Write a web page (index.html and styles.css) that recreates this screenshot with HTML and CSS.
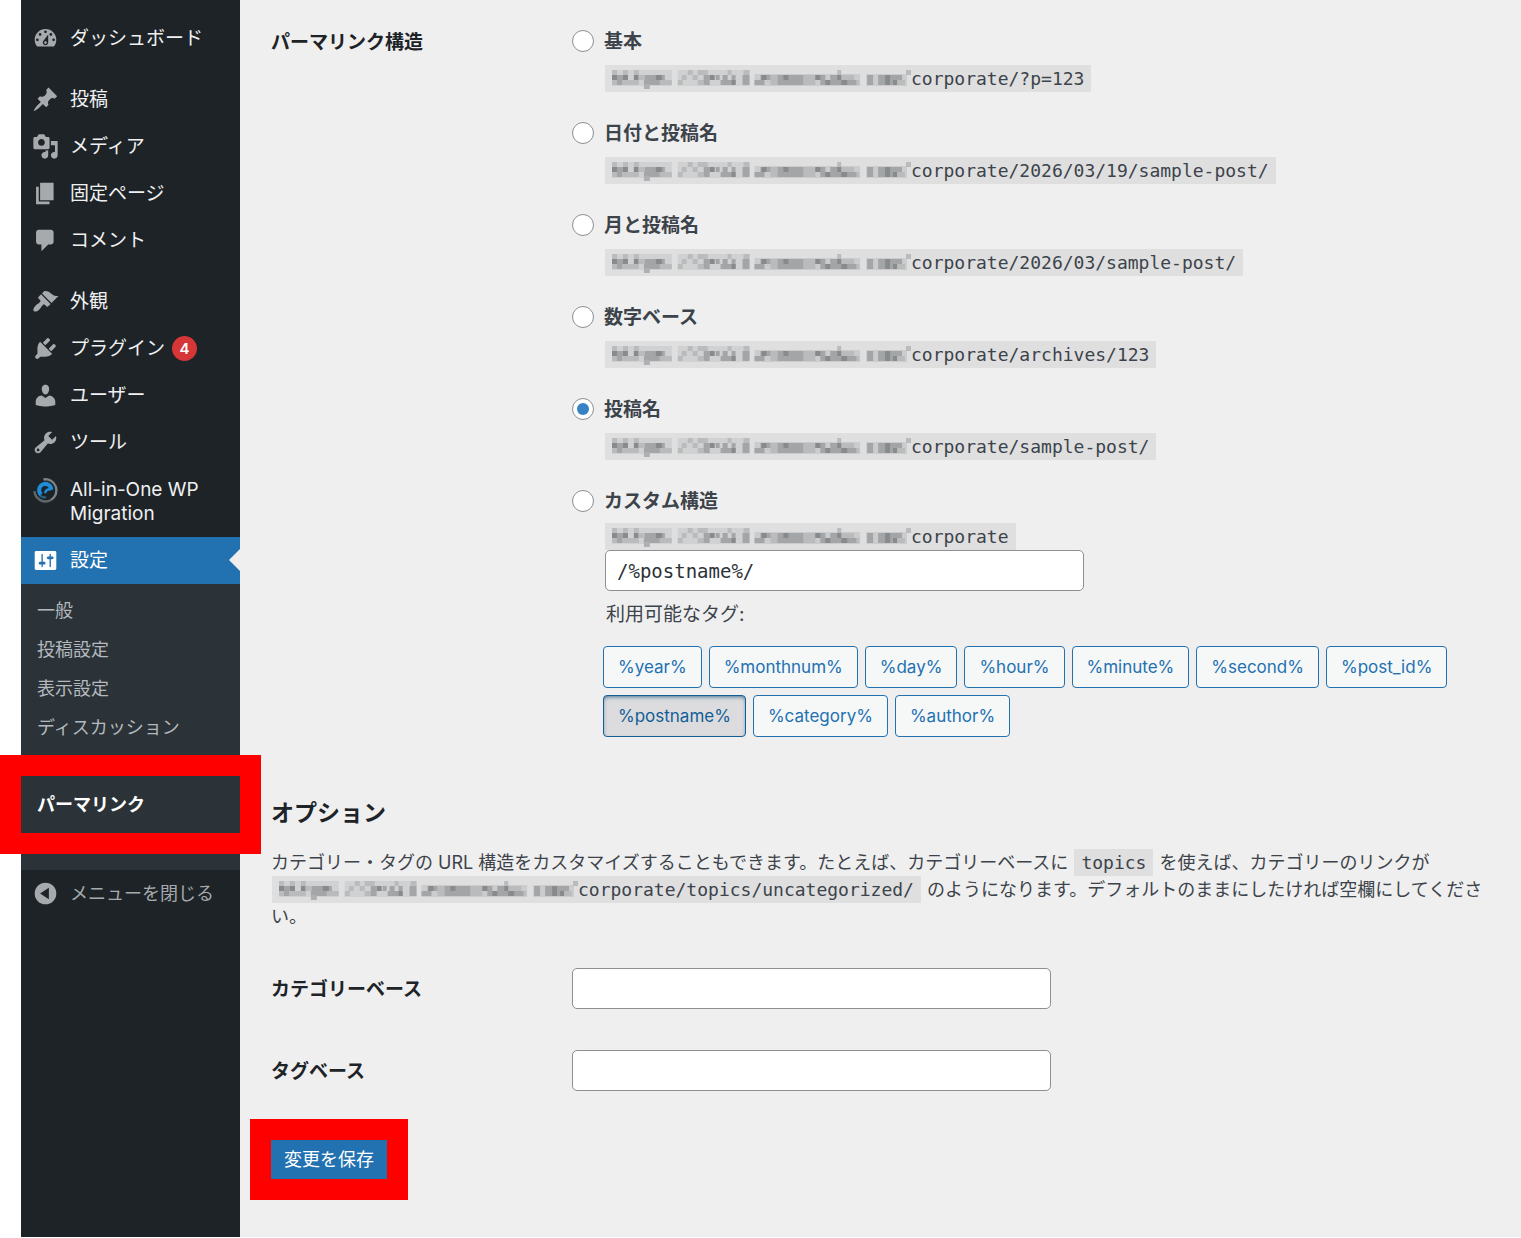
FILE: index.html
```html
<!DOCTYPE html>
<html lang="ja">
<head>
  <meta charset="UTF-8" />
  <meta name="viewport" content="width=device-width, initial-scale=1.0" />
  <link rel="stylesheet" href="styles.css">
  <title>パーマリンク設定</title>
</head>
<body>
<!-- Shared shapes -->
<svg class="defs" width="0" height="0" aria-hidden="true">
  <symbol id="masked-host" viewBox="0 0 300 20">
    <path fill="none" stroke="#d0d1d2" stroke-width="16" d="M0 9h60M66 9h72"/>
    <path fill="none" stroke="#cbcccd" stroke-width="12" d="M143 11h106M255 11h41"/>
    <g fill="none" stroke-width="5">
      <path stroke="#b9bbbc" d="M0 3.500h5M11 3.500h5M22 3.500h5M76 3.500h5M86 3.500h10M116 3.500h4M132 3.500h6M226 3.500h4M295 3.500h5M27 8.500h6M70 8.500h5M81 8.500h5M159 8.500h7M192 8.500h12M229 8.500h14M0 13.500h27M48 13.500h12M66 13.500h5M86 13.500h6M159 13.500h7M192 13.500h12M242 13.500h6M286 13.500h8"/>
      <path stroke="#a3a5a7" d="M5 8.500h6M22 8.500h5M33 8.500h20M92 8.500h6M104 8.500h4M111 8.500h5M120 8.500h4M131 8.500h7M149 8.500h10M166 8.500h26M204 8.500h10M219 8.500h10M256 8.500h6M267 8.500h24M5 13.500h5M32 13.500h16M92 13.500h6M109 13.500h15M131 13.500h7M143 13.500h10M166 13.500h26M209 13.500h36M256 13.500h6M267 13.500h19"/>
      <path stroke="#888b8e" d="M0 8.500h5M11 8.500h5M22 8.500h4M44 8.500h6M98 8.500h5M150 8.500h5M172 8.500h5M204 8.500h5M226 8.500h4M274 8.500h5M120 13.500h4M214 13.500h5M230 13.500h6M274 13.500h5M282 13.500h4"/>
      <path stroke="#aeb0b3" d="M32 17.500h6"/>
    </g>
  </symbol>
</svg>

<div class="page">
  <nav class="sidebar">
    <ul class="menu">
      <li><a class="menu-item" href="#"><svg class="icon" viewBox="0 0 20 20"><path fill-rule="evenodd" d="M3.760 16h12.480c1.100-1.370 1.760-3.110 1.760-5 0-4.420-3.580-8-8-8s-8 3.580-8 8c0 1.890.66 3.630 1.760 5zM10 4c.55 0 1 .45 1 1s-.45 1-1 1-1-.45-1-1 .45-1 1-1zM6 6c.55 0 1 .45 1 1s-.45 1-1 1-1-.45-1-1 .45-1 1-1zm8 0c.55 0 1 .45 1 1s-.45 1-1 1-1-.45-1-1 .45-1 1-1zm-5.370 5.550L12 7v6c0 1.100-.9 2-2 2s-2-.9-2-2c0-.57.24-1.080.63-1.450zM4 10c.55 0 1 .45 1 1s-.45 1-1 1-1-.45-1-1 .45-1 1-1zm12 0c.55 0 1 .45 1 1s-.45 1-1 1-1-.45-1-1 .45-1 1-1zm-5 3c0-.55-.45-1-1-1s-1 .45-1 1 .45 1 1 1 1-.45 1-1z"/></svg><span>ダッシュボード</span></a></li>
      <li class="separator"></li>
      <li><a class="menu-item" href="#"><svg class="icon" viewBox="0 0 20 20"><path d="M10.440 3.020l1.820-1.820 6.360 6.350-1.830 1.820c-1.050-.68-2.480-.57-3.410.36l-.75.75c-.92.93-1.040 2.350-.35 3.410l-1.830 1.820-2.410-2.410-2.800 2.790c-.42.42-3.380 2.710-3.800 2.290s1.860-3.390 2.280-3.810l2.790-2.790L4.100 9.360l1.830-1.820c1.050.69 2.480.57 3.400-.36l.75-.75c.93-.92 1.050-2.350.36-3.410z"/></svg><span>投稿</span></a></li>
      <li><a class="menu-item" href="#"><svg class="icon" viewBox="0 0 20 20"><path fill-rule="evenodd" d="M13 11V4c0-.55-.45-1-1-1h-1.670L9 1H5L3.670 3H2c-.55 0-1 .45-1 1v7c0 .55.45 1 1 1h10c.55 0 1-.45 1-1zM7 4.500c1.380 0 2.500 1.120 2.500 2.500S8.380 9.500 7 9.500 4.500 8.380 4.500 7 5.620 4.500 7 4.500zM14 6h5v10.500c0 1.380-1.120 2.500-2.500 2.500S14 17.880 14 16.500s1.120-2.500 2.500-2.500c.17 0 .34.02.5.05V9h-3V6zm-4 8.050V13h2v3.500c0 1.380-1.120 2.500-2.500 2.500S7 17.880 7 16.500 8.120 14 9.500 14c.17 0 .34.02.5.05z"/></svg><span>メディア</span></a></li>
      <li><a class="menu-item" href="#"><svg class="icon" viewBox="0 0 20 20"><path d="M6 15V2h10v13H6zm-1 1h8v2H3V5h2v11z"/></svg><span>固定ページ</span></a></li>
      <li><a class="menu-item" href="#"><svg class="icon" viewBox="0 0 20 20"><path d="M5 2h9c1.100 0 2 .9 2 2v7c0 1.100-.9 2-2 2h-2l-5 5v-5H5c-1.100 0-2-.9-2-2V4c0-1.100.9-2 2-2z"/></svg><span>コメント</span></a></li>
      <li class="separator"></li>
      <li><a class="menu-item" href="#"><svg class="icon" viewBox="0 0 20 20"><path d="M14.480 11.060L7.410 3.990l1.500-1.500c.5-.56 2.300-.47 3.510.32 1.210.8 1.430 1.280 2.910 2.100 1.180.64 2.450 1.260 4.450.85zm-.71.71L6.700 4.700 4.930 6.470c-.39.39-.39 1.020 0 1.410l1.060 1.060c.39.39.39 1.030 0 1.420-.6.6-1.430 1.110-2.210 1.690-.35.26-.7.53-1.010.84C1.430 14.230.4 16.080 1.400 17.070c.99 1 2.840-.03 4.180-1.360.31-.31.58-.66.85-1.020.57-.78 1.080-1.610 1.690-2.210.39-.39 1.020-.39 1.410 0l1.060 1.060c.39.39 1.020.39 1.410 0z"/></svg><span>外観</span></a></li>
      <li><a class="menu-item" href="#"><svg class="icon" viewBox="0 0 20 20"><path d="M13.110 4.360L9.870 7.600 8 5.730l3.240-3.240c.35-.34 1.050-.2 1.560.32.52.51.66 1.210.31 1.550zm-8 1.770l.91-1.120 9.010 9.010-1.190.84c-.71.71-2.630 1.160-3.820 1.160H6.140L4.900 17.260c-.59.59-1.540.59-2.120 0-.59-.58-.59-1.530 0-2.120l1.240-1.240v-3.880c0-1.130.4-3.190 1.090-3.890zm7.260 3.970l3.240-3.240c.34-.35 1.040-.21 1.550.31.52.51.66 1.210.31 1.550l-3.240 3.250z"/></svg><span>プラグイン</span><span class="badge">4</span></a></li>
      <li><a class="menu-item" href="#"><svg class="icon" viewBox="0 0 20 20"><path d="M10 9.250c-2.270 0-2.730-3.440-2.730-3.440C7 4.020 7.820 2 9.970 2c2.160 0 2.980 2.020 2.710 3.810 0 0-.41 3.440-2.680 3.440zm0 2.570L12.720 10c2.390 0 4.520 2.330 4.520 4.530v2.490s-3.650 1.130-7.240 1.130c-3.650 0-7.240-1.130-7.240-1.130v-2.490c0-2.250 1.940-4.480 4.470-4.480z"/></svg><span>ユーザー</span></a></li>
      <li><a class="menu-item" href="#"><svg class="icon" viewBox="0 0 20 20"><path fill-rule="evenodd" d="M16.680 9.770c-1.340 1.340-3.300 1.670-4.950.99l-5.410 6.520c-.99.99-2.590.99-3.580 0s-.99-2.590 0-3.570l6.520-5.420c-.68-1.650-.35-3.610.99-4.950 1.280-1.280 3.120-1.620 4.720-1.060l-2.890 2.890 2.820 2.820 2.860-2.870c.53 1.580.18 3.390-1.080 4.650zM3.810 16.210c.4.39 1.040.39 1.430 0 .4-.4.4-1.040 0-1.430-.39-.4-1.030-.4-1.430 0-.39.39-.39 1.030 0 1.430z"/></svg><span>ツール</span></a></li>
      <li><a class="menu-item two-line" href="#"><svg class="icon" viewBox="0 0 20 20"><g fill="none"><path stroke="#7d8488" stroke-width="1.800" d="M8.500 1.800A8.200 8.200 0 0 1 14 17"/><path stroke="#5f676c" stroke-width="1.800" d="M14 17A8.200 8.200 0 0 1 1.800 10.500"/><path stroke="#2d5d80" stroke-width="1.600" d="M5 12A5.200 5.200 0 0 0 10.500 15"/><path stroke="#1e8cd6" stroke-width="3" d="M6.800 13A4.500 4.500 0 1 1 14.300 9.500"/><path stroke="#1e8cd6" stroke-width="1.800" d="M14 9.500A2.800 2.800 0 0 0 9.800 12"/></g></svg><span>All-in-One WP<br>Migration</span></a></li>
      <li>
        <a class="menu-item current" href="#"><svg class="icon" viewBox="0 0 20 20"><path fill-rule="evenodd" d="M18 16V4c0-.55-.45-1-1-1H3c-.55 0-1 .45-1 1v12c0 .55.45 1 1 1h14c.55 0 1-.45 1-1zM8 11h1c.55 0 1 .45 1 1s-.45 1-1 1H8v1.500c0 .28-.22.5-.5.5s-.5-.22-.5-.5V13H6c-.55 0-1-.45-1-1s.45-1 1-1h1V5.500c0-.28.22-.5.5-.5s.5.22.5.5V11zm5-2h-1c-.55 0-1-.45-1-1s.45-1 1-1h1V5.500c0-.28.22-.5.5-.5s.5.22.5.5V7h1c.55 0 1 .45 1 1s-.45 1-1 1h-1v5.500c0 .28-.22.5-.5.5s-.5-.22-.5-.5V9z"/></svg><span>設定</span></a>
        <ul class="submenu">
          <li><a href="#">一般</a></li>
          <li><a href="#">投稿設定</a></li>
          <li><a href="#">表示設定</a></li>
          <li><a href="#">ディスカッション</a></li>
          <li class="submenu-active marked"><a href="#">パーマリンク</a></li>
        </ul>
      </li>
    </ul>
    <button type="button" class="menu-item collapse"><svg class="icon" viewBox="0 0 20 20"><path fill-rule="evenodd" d="M10 2a8 8 0 1 0 0 16a8 8 0 1 0 0-16zM12.500 5.800v8.400L6 10z"/></svg><span>メニューを閉じる</span></button>
  </nav>

  <main class="content">
    <form>
      <div class="form-row">
        <h3 class="row-title">パーマリンク構造</h3>
        <div class="options">
          <div class="option">
            <input type="radio" name="structure" id="plain">
            <label for="plain">基本</label>
            <code><svg class="host"><use href="#masked-host"/></svg>corporate/?p=123</code>
          </div>
          <div class="option">
            <input type="radio" name="structure" id="day-name">
            <label for="day-name">日付と投稿名</label>
            <code><svg class="host"><use href="#masked-host"/></svg>corporate/2026/03/19/sample-post/</code>
          </div>
          <div class="option">
            <input type="radio" name="structure" id="month-name">
            <label for="month-name">月と投稿名</label>
            <code><svg class="host"><use href="#masked-host"/></svg>corporate/2026/03/sample-post/</code>
          </div>
          <div class="option">
            <input type="radio" name="structure" id="numeric">
            <label for="numeric">数字ベース</label>
            <code><svg class="host"><use href="#masked-host"/></svg>corporate/archives/123</code>
          </div>
          <div class="option">
            <input type="radio" name="structure" id="post-name" checked>
            <label for="post-name">投稿名</label>
            <code><svg class="host"><use href="#masked-host"/></svg>corporate/sample-post/</code>
          </div>
          <div class="option custom">
            <input type="radio" name="structure" id="custom">
            <label for="custom">カスタム構造</label>
            <code><svg class="host"><use href="#masked-host"/></svg>corporate</code>
            <input type="text" class="text-input mono" value="/%postname%/" aria-label="カスタム構造">
          </div>
          <p class="tags-label">利用可能なタグ:</p>
          <div class="tags">
            <button type="button" class="tag">%year%</button>
            <button type="button" class="tag">%monthnum%</button>
            <button type="button" class="tag">%day%</button>
            <button type="button" class="tag">%hour%</button>
            <button type="button" class="tag">%minute%</button>
            <button type="button" class="tag">%second%</button>
            <button type="button" class="tag">%post_id%</button>
            <button type="button" class="tag active">%postname%</button>
            <button type="button" class="tag">%category%</button>
            <button type="button" class="tag">%author%</button>
          </div>
        </div>
      </div>

      <h2>オプション</h2>
      <p class="description">カテゴリー・タグの URL 構造をカスタマイズすることもできます。たとえば、カテゴリーベースに <code>topics</code> を使えば、カテゴリーのリンクが <code><svg class="host"><use href="#masked-host"/></svg>corporate/topics/uncategorized/</code> のようになります。デフォルトのままにしたければ空欄にしてください。</p>

      <div class="form-row base-row">
        <label class="row-title" for="category-base">カテゴリーベース</label>
        <input type="text" class="text-input" id="category-base">
      </div>
      <div class="form-row base-row">
        <label class="row-title" for="tag-base">タグベース</label>
        <input type="text" class="text-input" id="tag-base">
      </div>

      <button type="submit" class="save marked">変更を保存</button>
    </form>
  </main>
</div>
</body>
</html>
```

FILE: styles.css
```css
* {
  box-sizing: border-box;
}

body {
  margin: 0;
  background: #fff;
  color: #3c434a;
  font-family: Inter, "Noto Sans CJK JP", sans-serif;
  font-size: 18px;
  line-height: 27px;
}

ul, p, h2, h3 {
  margin: 0;
  padding: 0;
}

ul {
  list-style: none;
}

a {
  color: inherit;
  text-decoration: none;
}

.defs {
  position: absolute;
}

.page {
  display: flex;
  min-height: calc(100vh - 1px);
  margin-left: 21px;
}

/* Red frame around the places to click */
.marked {
  position: relative;
  z-index: 1;
  outline: 21px solid #f00;
}

/* Sidebar */
.sidebar {
  flex: 0 0 219px;
  padding-top: 15px;
  background: #1d2327;
  color: #f0f0f1;
}

.menu-item {
  display: flex;
  align-items: center;
  gap: 11px;
  position: relative;
  height: 47px;
  padding-left: 11px;
  font-size: 19px;
  line-height: 24px;
}

.menu-item span {
  padding-top: 1px;
}

.icon {
  flex: none;
  width: 27px;
  height: 27px;
  fill: #a7aaad;
}

.separator {
  height: 14px;
}

.two-line {
  align-items: flex-start;
  height: 71px;
  padding-top: 11px;
}

.menu-item .badge {
  width: 25px;
  height: 25px;
  margin-left: -4px;
  padding: 0;
  border-radius: 50%;
  background: #d63638;
  color: #fff;
  font-size: 15px;
  font-weight: 600;
  line-height: 25px;
  text-align: center;
}

.current {
  background: #2271b1;
  color: #fff;
}

.current .icon {
  fill: #fff;
}

.current::after {
  content: "";
  position: absolute;
  top: 12px;
  right: 0;
  border: 11px solid transparent;
  border-left: 0;
  border-right-color: #efefef;
}

.submenu {
  padding: 7px 0 37px;
  background: #2c3338;
  color: #b4b9be;
}

.submenu li {
  padding-left: 16px;
  line-height: 39px;
}

.submenu .submenu-active {
  margin-top: 29px;
  background: #2c3338;
  color: #fff;
  font-weight: 700;
  line-height: 57px;
}

.collapse {
  width: 100%;
  border: 0;
  background: none;
  color: #a7aaad;
  font-family: inherit;
  font-size: 18px;
}

/* Settings form */
.content {
  flex: 1;
  min-width: 0;
  padding: 27px 27px 38px 31px;
  background: #efefef;
}

.form-row {
  display: grid;
  grid-template-columns: 301px 1fr;
}

.row-title {
  padding-top: 2px;
  color: #1d2327;
  font-size: 19px;
  font-weight: 700;
  line-height: 28px;
}

.option {
  display: grid;
  grid-template-columns: 22px 1fr;
  column-gap: 10px;
  justify-items: start;
  align-items: center;
  margin-bottom: 27px;
}

.option label {
  padding-top: 2px;
  font-size: 19px;
  font-weight: 700;
  line-height: 26px;
}

.option code {
  grid-column: 2;
  margin-top: 10px;
}

.option .text-input {
  grid-column: 2;
  margin-left: 1px;
}

.option.custom {
  margin-bottom: 10px;
}

.custom code {
  margin-top: 8px;
}

input[type="radio"] {
  appearance: none;
  display: grid;
  place-content: center;
  width: 22px;
  height: 22px;
  margin: 0;
  border: 1px solid #8c8f94;
  border-radius: 50%;
  background: #fff;
}

input[type="radio"]:checked::before {
  content: "";
  width: 12px;
  height: 12px;
  border-radius: 50%;
  background: #3582c4;
}

code {
  margin: 0 1px;
  padding: 3px 7px;
  background: #dfdfe0;
  font-family: "DejaVu Sans Mono", monospace;
  font-size: 18px;
  line-height: 21px;
  white-space: nowrap;
}

.host {
  width: 299px;
  height: 20px;
  vertical-align: -4px;
}

.text-input {
  width: 100%;
  max-width: 479px;
  height: 41px;
  padding: 0 11px;
  border: 1px solid #8c8f94;
  border-radius: 5px;
  background: #fff;
  color: #2c3338;
  font-size: 19px;
}

.mono {
  font-family: "DejaVu Sans Mono", monospace;
}

.tags-label {
  padding-left: 34px;
  font-size: 19px;
}

.tags {
  display: flex;
  flex-wrap: wrap;
  gap: 7px;
  margin-top: 18px;
  padding-left: 31px;
}

.tag {
  height: 42px;
  padding: 0 14px;
  border: 1px solid #2271b1;
  border-radius: 4px;
  background: #f6f7f7;
  color: #2271b1;
  font-family: inherit;
  font-size: 17px;
}

.tag.active {
  border-color: #135e96;
  background: #dcdcde;
  box-shadow: inset 0 2px 5px -2px #0a4b78;
  color: #135e96;
}

h2 {
  margin-top: 61px;
  color: #1d2327;
  font-size: 23px;
  line-height: 30px;
}

.description {
  margin-top: 21px;
}

.base-row {
  align-items: center;
  margin-top: 38px;
}

.base-row + .base-row {
  margin-top: 41px;
}

.save {
  height: 39px;
  margin-top: 49px;
  padding: 0 13px 3px;
  border: 0;
  background: #2271b1;
  color: #fff;
  font-family: inherit;
  font-size: 18px;
}
```
